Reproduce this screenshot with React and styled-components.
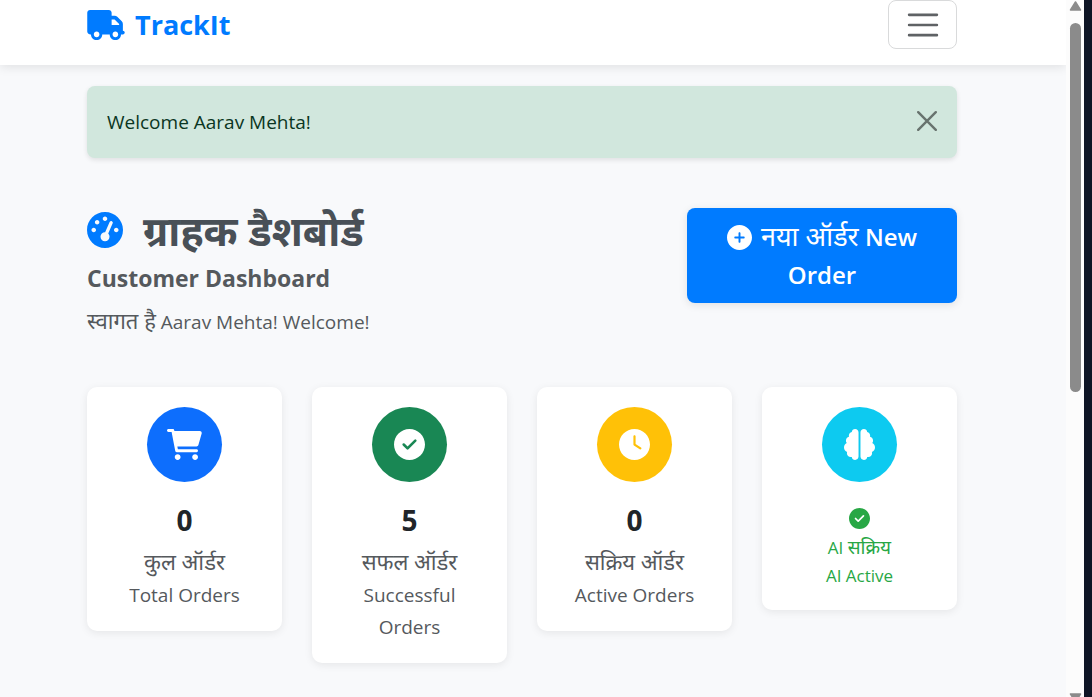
import React, { useState } from "react";
import styled, { createGlobalStyle } from "styled-components";
import { FaBrain } from "react-icons/fa6";

const GlobalStyle = createGlobalStyle`
  * { box-sizing: border-box; }
  body {
    margin: 0;
    background: #f8f9fb;
    color: #212529;
    font-family: "Segoe UI", "Open Sans", "Noto Sans", "Noto Sans Devanagari", sans-serif;
    font-size: 19px;
    line-height: 32px;
  }
  h1, h2, p { margin: 0; }
  button { font-family: inherit; cursor: pointer; }
`;

const Shell = styled.div`
  display: flex;
  height: 100vh;
  overflow: hidden;
`;

const Page = styled.div`
  flex: 1;
  min-width: 0;
  overflow: hidden;
`;

const Navbar = styled.header`
  display: flex;
  align-items: flex-start;
  justify-content: space-between;
  height: 65px;
  padding: 0 109px 0 87px;
  background: #fff;
  box-shadow: 0 2px 10px rgba(0, 0, 0, 0.1);
`;

const Brand = styled.a`
  display: flex;
  align-items: center;
  gap: 10px;
  height: 50px;
  color: #007bff;
  font-size: 27px;
  font-weight: 700;
  text-decoration: none;
  svg { width: 38px; height: 30px; }
`;

const MenuButton = styled.button`
  display: flex;
  align-items: center;
  justify-content: center;
  width: 69px;
  height: 49px;
  padding: 0;
  border: 1px solid #d9dadb;
  border-radius: 8px;
  background: transparent;
`;

const Content = styled.main`
  padding: 21px 109px 30px 87px;
`;

const Alert = styled.div`
  display: flex;
  align-items: center;
  justify-content: space-between;
  height: 72px;
  padding: 0 20px;
  border-radius: 8px;
  background: #d1e7dd;
  color: #0a3622;
  box-shadow: 0 2px 5px rgba(0, 0, 0, 0.1);
`;

const CloseButton = styled.button`
  display: flex;
  padding: 0 0 2px;
  border: 0;
  background: none;
`;

const Intro = styled.section`
  display: flex;
  align-items: flex-start;
  justify-content: space-between;
  margin: 40px 0 49px;
`;

const Title = styled.h1`
  display: flex;
  align-items: center;
  gap: 20px;
  height: 64px;
  color: #495057;
  font-size: 41px;
  font-weight: 700;
  white-space: nowrap;
  svg { width: 36px; height: 36px; color: #007bff; }
`;

const Subtitle = styled.h2`
  color: #55595d;
  font-size: 23px;
  font-weight: 700;
  line-height: 32px;
`;

const Greeting = styled.p`
  margin-top: 12px;
  color: #55595d;
`;

const Hindi = styled.span`
  font-size: ${(p) => p.$size || 22}px;
  font-weight: 400;
  line-height: 1;
`;

const OrderButton = styled.button`
  width: 270px;
  margin-top: 10px;
  padding: 10px 30px 9px;
  border: 0;
  border-radius: 8px;
  background: #007bff;
  color: #fff;
  font-size: 24px;
  font-weight: 600;
  line-height: 38px;
  box-shadow: 0 2px 8px rgba(0, 0, 0, 0.1);
  svg { width: 25px; height: 25px; margin-right: 9px; vertical-align: -4px; }
`;

const Cards = styled.section`
  display: grid;
  grid-template-columns: repeat(4, 1fr);
  gap: 30px;
  align-items: start;
`;

const Card = styled.article`
  display: flex;
  flex-direction: column;
  align-items: center;
  padding: 20px;
  border-radius: 10px;
  background: #fff;
  text-align: center;
  box-shadow: 0 2px 8px rgba(0, 0, 0, 0.08);
`;

const Badge = styled.div`
  display: flex;
  align-items: center;
  justify-content: center;
  width: 75px;
  height: 75px;
  margin-bottom: 20px;
  border-radius: 50%;
  background: ${(p) => p.$color};
  color: #fff;
  svg { height: 31px; width: auto; }
`;

const Count = styled.div`
  margin-bottom: 9px;
  font-size: 28px;
  font-weight: 700;
  line-height: 36px;
`;

const Label = styled.p`
  min-height: 32px;
  color: #55595d;
`;

const Status = styled.div`
  display: flex;
  flex-direction: column;
  align-items: center;
  color: #28a745;
  font-size: 17px;
  line-height: 28px;
  svg { width: 21px; height: 21px; margin: 6px 0 5px; }
`;

const StatusLine = styled.div`
  height: 28px;
`;

const Scrollbar = styled.div`
  display: flex;
  flex-direction: column;
  align-items: center;
  width: 18px;
  padding-left: 1px;
  background: #fcfcfc;
`;

const Thumb = styled.div`
  width: 11px;
  height: 369px;
  margin: 12px 0 auto;
  border-radius: 6px;
  background: #8b8b8b;
`;

const Edge = styled.div`
  width: 8px;
  background: #0e1525;
`;

const disc = "M0 256C0 114.6 114.6 0 256 0C397.4 0 512 114.6 512 256C512 397.4 397.4 512 256 512C114.6 512 0 397.4 0 256z";

const Glyph = ({ width = 512, d }) => (
  <svg viewBox={`0 0 ${width} 512`} fill="currentColor" fillRule="evenodd" aria-hidden="true">
    <path d={d} />
  </svg>
);

const TruckIcon = () => (
  <Glyph width={640} d="M368 0C394.5 0 416 21.5 416 48V96H466.7C483.7 96 500 102.7 512 114.7L589.3 192C601.3 204 608 220.3 608 237.3V352C625.7 352 640 366.3 640 384C640 401.7 625.7 416 608 416H576C576 469 533 512 480 512C426.1 512 384 469 384 416H256C256 469 213 512 160 512C106.1 512 64 469 64 416H48C21.49 416 0 394.5 0 368V48C0 21.49 21.49 0 48 0H368zM416 160V256H544V237.3L466.7 160H416zM160 368C133.5 368 112 389.5 112 416C112 442.5 133.5 464 160 464C186.5 464 208 442.5 208 416C208 389.5 186.5 368 160 368zM480 464C506.5 464 528 442.5 528 416C528 389.5 506.5 368 480 368C453.5 368 432 389.5 432 416C432 442.5 453.5 464 480 464z" />
);

const GaugeIcon = () => (
  <Glyph d={disc + "M256 64C238.3 64 224 78.33 224 96C224 113.7 238.3 128 256 128C273.7 128 288 113.7 288 96C288 78.33 273.7 64 256 64zM256 416C291.3 416 320 387.3 320 352C320 334.6 313.1 318.9 301.9 307.4L365.1 161.7C371.3 149.5 365.8 135.4 353.7 130C341.5 124.7 327.4 130.2 322 142.3L257.9 288H256C220.7 288 192 316.7 192 352C192 387.3 220.7 416 256 416zM144 112C126.3 112 112 126.3 112 144C112 161.7 126.3 176 144 176C161.7 176 176 161.7 176 144C176 126.3 161.7 112 144 112zM96 288C113.7 288 128 273.7 128 256C128 238.3 113.7 224 96 224C78.33 224 64 238.3 64 256C64 273.7 78.33 288 96 288zM416 224C398.3 224 384 238.3 384 256C384 273.7 398.3 288 416 288C433.7 288 448 273.7 448 256C448 238.3 433.7 224 416 224z"} />
);

const PlusIcon = () => (
  <Glyph d={disc + "M256 362C267 362 276 353 276 342V276H342C353 276 362 267 362 256C362 245 353 236 342 236H276V170C276 159 267 150 256 150C245 150 236 159 236 170V236H170C159 236 150 245 150 256C150 267 159 276 170 276H236V342C236 353 245 362 256 362z"} />
);

const CheckIcon = () => (
  <Glyph d={disc + "M367 207A21 21 0 0 0 337 177L224 290L175 241A21 21 0 0 0 145 271L209 335A21 21 0 0 0 239 335z"} />
);

const ClockIcon = () => (
  <Glyph d={disc + "M238 256C238 263 241 268 246 272L342 336C351 342 362 340 367 332C373 323 371 312 363 306L274 247V120C274 110 266 102 256 102C246 102 238 110 238 120z"} />
);

const CartIcon = () => (
  <Glyph width={576} d="M96 0C107.5 0 117.1 8.19 119.6 19.51L121.1 32H541.8C562.1 32 578.3 52.25 572.6 72.66L518.6 264.7C514.7 278.5 502.1 288 487.8 288H170.7L179.9 336H488C501.3 336 512 346.7 512 360C512 373.3 501.3 384 488 384H159.1C148.5 384 138.9 375.8 136.4 364.5L76.14 48H24C10.75 48 0 37.25 0 24C0 10.75 10.75 0 24 0H96zM128 464C128 437.5 149.5 416 176 416C202.5 416 224 437.5 224 464C224 490.5 202.5 512 176 512C149.5 512 128 490.5 128 464zM512 464C512 490.5 490.5 512 464 512C437.5 512 416 490.5 416 464C416 437.5 437.5 416 464 416C490.5 416 512 437.5 512 464z" />
);

const stats = [
  { icon: CartIcon, color: "#0d6efd", count: 0, hindi: "कुल ऑर्डर", english: "Total Orders" },
  { icon: CheckIcon, color: "#198754", count: 5, hindi: "सफल ऑर्डर", english: "Successful Orders" },
  { icon: ClockIcon, color: "#ffc107", count: 0, hindi: "सक्रिय ऑर्डर", english: "Active Orders" },
];

export default function App() {
  const [showAlert, setShowAlert] = useState(true);
  return (
    <Shell>
      <GlobalStyle />
      <Page>
        <Navbar>
          <Brand href="#"><TruckIcon />TrackIt</Brand>
          <MenuButton aria-label="Toggle navigation">
            <svg width="38" height="38" viewBox="0 0 30 30" fill="none" stroke="#5f6265" strokeWidth="2" strokeLinecap="round">
              <path d="M4 7h22M4 15h22M4 23h22" />
            </svg>
          </MenuButton>
        </Navbar>
        <Content>
          {showAlert && (
            <Alert role="alert">
              Welcome Aarav Mehta!
              <CloseButton aria-label="Close" onClick={() => setShowAlert(false)}>
                <svg width="20" height="20" viewBox="0 0 20 20" fill="none" stroke="#68736e" strokeWidth="2.4" strokeLinecap="round">
                  <path d="M1.2 1.2 18.8 18.8M18.8 1.2 1.2 18.8" />
                </svg>
              </CloseButton>
            </Alert>
          )}
          <Intro>
            <div>
              <Title><GaugeIcon />ग्राहक डैशबोर्ड</Title>
              <Subtitle>Customer Dashboard</Subtitle>
              <Greeting><Hindi>स्वागत है</Hindi> Aarav Mehta! Welcome!</Greeting>
            </div>
            <OrderButton><PlusIcon /><Hindi $size={27}>नया ऑर्डर</Hindi> New Order</OrderButton>
          </Intro>
          <Cards>
            {stats.map(({ icon: Icon, color, count, hindi, english }) => (
              <Card key={english}>
                <Badge $color={color}><Icon /></Badge>
                <Count>{count}</Count>
                <Label><Hindi>{hindi}</Hindi></Label>
                <Label>{english}</Label>
              </Card>
            ))}
            <Card>
              <Badge $color="#0dcaf0"><FaBrain /></Badge>
              <Status>
                <CheckIcon />
                <StatusLine>AI <Hindi $size={19}>सक्रिय</Hindi></StatusLine>
                <StatusLine>AI Active</StatusLine>
              </Status>
            </Card>
          </Cards>
        </Content>
      </Page>
      <Scrollbar aria-hidden="true">
        <svg width="13" height="11" viewBox="0 0 13 11">
          <path d="M6.5 2 11.5 10h-10z" fill="#8b8b8b" stroke="#8b8b8b" strokeWidth="1.5" strokeLinejoin="round" />
        </svg>
        <Thumb />
        <svg width="13" height="4" viewBox="0 0 13 4">
          <path d="M1.5 1h10L6.5 9z" fill="#8b8b8b" stroke="#8b8b8b" strokeWidth="1.5" strokeLinejoin="round" />
        </svg>
      </Scrollbar>
      <Edge />
    </Shell>
  );
}
